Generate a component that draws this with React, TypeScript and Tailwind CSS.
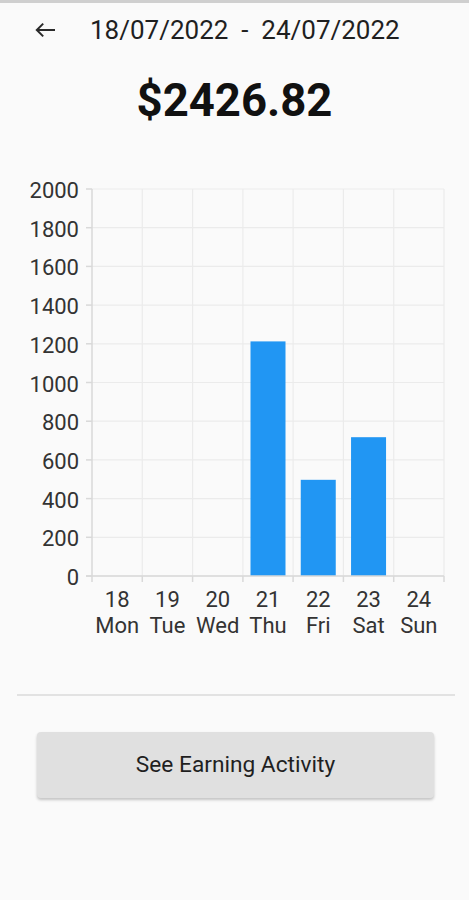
import React from "react";

const cols = [92, 142.3, 192.6, 242.9, 293.1, 343.4, 393.7, 444];
const zeroY = 576;
const step = 38.7; // per 200
const yVals = [0, 200, 400, 600, 800, 1000, 1200, 1400, 1600, 1800, 2000];
const days = [
  ["18", "Mon"],
  ["19", "Tue"],
  ["20", "Wed"],
  ["21", "Thu"],
  ["22", "Fri"],
  ["23", "Sat"],
  ["24", "Sun"],
];
const values = [0, 0, 0, 1212.4, 497.1, 717.32];

function Chart() {
  const yOf = (v: number) => zeroY - (v / 200) * step;
  return (
    <svg
      width={469}
      height={480}
      viewBox="0 170 469 480"
      className="block"
      style={{ fontFamily: "Roboto, 'Liberation Sans', sans-serif" }}
    >
      {yVals.map((v) => (
        <line key={"h" + v} x1={92} x2={444} y1={yOf(v)} y2={yOf(v)} stroke="#ebebeb" strokeWidth={1.2} />
      ))}
      {cols.slice(1).map((x) => (
        <line key={"v" + x} x1={x} x2={x} y1={yOf(2000)} y2={zeroY} stroke="#ebebeb" strokeWidth={1.2} />
      ))}
      {values.map((v, i) =>
        v > 0 ? (
          <rect
            key={"b" + i}
            x={(cols[i] + cols[i + 1]) / 2 - 17.5}
            y={yOf(v)}
            width={35}
            height={zeroY - yOf(v)}
            fill="#2196f3"
          />
        ) : null
      )}
      <line x1={92} x2={92} y1={yOf(2000)} y2={zeroY} stroke="#d9d9d9" strokeWidth={1.5} />
      <line x1={86} x2={444} y1={zeroY} y2={zeroY} stroke="#d9d9d9" strokeWidth={1.5} />
      {yVals.map((v) => (
        <line key={"t" + v} x1={86} x2={92} y1={yOf(v)} y2={yOf(v)} stroke="#d9d9d9" strokeWidth={1.5} />
      ))}
      {cols.map((x) => (
        <line key={"bt" + x} x1={x} x2={x} y1={zeroY} y2={582} stroke="#d9d9d9" strokeWidth={1.5} />
      ))}
      {yVals.map((v) => (
        <text key={"l" + v} x={79} y={yOf(v) + 9} textAnchor="end" fontSize={22} fill="#333333">
          {v}
        </text>
      ))}
      {days.map(([d, n], i) => {
        const cx = (cols[i] + cols[i + 1]) / 2;
        return (
          <g key={"x" + i}>
            <text x={cx} y={607} textAnchor="middle" fontSize={22} fill="#333333">
              {d}
            </text>
            <text x={cx} y={633} textAnchor="middle" fontSize={22} fill="#333333">
              {n}
            </text>
          </g>
        );
      })}
    </svg>
  );
}

export default function App() {
  return (
    <div className="w-[469px] h-[900px] bg-[#fafafa] font-['Roboto','Liberation_Sans',sans-serif] overflow-hidden">
      <div className="h-[3px] bg-[#cfcfcf]" />
      <div className="h-[54px] flex items-center pl-[34px]">
        <svg width={24} height={24} viewBox="0 0 24 24" fill="none" stroke="#2a2a2a" strokeWidth={2}>
          <path d="M21 12H3" />
          <path d="M9.2 5.6L2.8 12l6.4 6.4" />
        </svg>
        <span className="ml-[32px] text-[26px] leading-none text-[#1f1f1f] whitespace-pre">
          {"18/07/2022  -  24/07/2022"}
        </span>
      </div>
      <div className="mt-[3px] h-[82px] flex items-center justify-center">
        <span className="text-[45.5px] leading-none font-bold text-[#111111]">$2426.82</span>
      </div>
      <div className="mt-[28px]">
        <Chart />
      </div>
      <div className="mt-[44px] ml-[17px] mr-[14px] h-[2px] bg-[#e2e2e2]" />
      <div className="mt-[36px] ml-[37px] mr-[35px] h-[66px] rounded-[4px] bg-[#e0e0e0] shadow-[0_2px_3px_rgba(0,0,0,0.22)] flex items-center justify-center">
        <span className="text-[22.7px] leading-none text-[#1f1f1f]">See Earning Activity</span>
      </div>
    </div>
  );
}
